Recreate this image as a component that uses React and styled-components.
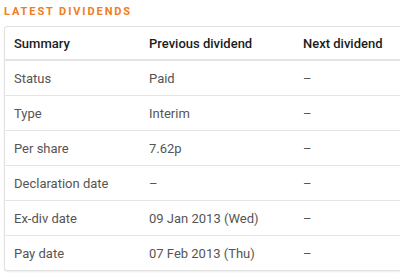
import React from "react";
import styled, { createGlobalStyle } from "styled-components";

const Global = createGlobalStyle`
  html, body { margin: 0; padding: 0; background: #fff; overflow: hidden; }
  body { font-family: Roboto, "Liberation Sans", sans-serif; }
`;

const Page = styled.div`
  padding: 5px 0 0 4px;
  width: 400px;
  box-sizing: border-box;
  overflow: hidden;
`;

const Title = styled.h2`
  margin: 0 0 8px 0;
  font-size: 11px;
  line-height: 13px;
  font-weight: 700;
  letter-spacing: 1.9px;
  color: #ef7d22;
  text-transform: uppercase;
`;

const Card = styled.div`
  border: 1px solid #e2e2e2;
  border-right: none;
  border-radius: 3px 0 0 3px;
  box-shadow: 0 1px 2px rgba(0, 0, 0, 0.08);
  margin-bottom: 3px;
  overflow: hidden;
`;

const Table = styled.table`
  border-collapse: collapse;
  width: 100%;
  table-layout: fixed;
`;

const Th = styled.th`
  box-sizing: border-box;
  text-align: left;
  font-weight: 500;
  font-size: 13px;
  color: #1c1c1c;
  height: 33px;
  padding: 0 9px;
  border-bottom: 2px solid #e4e4e4;
  white-space: nowrap;
  width: ${(p) => p.$w || "auto"};
`;

const Td = styled.td`
  font-size: 13px;
  color: #555;
  height: 34px;
  padding: 0 9px;
  border-bottom: 1px solid #e4e4e4;
  white-space: nowrap;
`;

const Tr = styled.tr`
  &:last-child td { border-bottom: none; }
`;

const rows = [
  ["Status", "Paid", "–"],
  ["Type", "Interim", "–"],
  ["Per share", "7.62p", "–"],
  ["Declaration date", "–", "–"],
  ["Ex-div date", "09 Jan 2013 (Wed)", "–"],
  ["Pay date", "07 Feb 2013 (Thu)", "–"],
];

export default function App() {
  return (
    <>
      <Global />
      <Page>
        <Title>Latest dividends</Title>
        <Card>
          <Table>
            <thead>
              <tr>
                <Th $w="135px">Summary</Th>
                <Th $w="154px">Previous dividend</Th>
                <Th>Next dividend</Th>
              </tr>
            </thead>
            <tbody>
              {rows.map((r) => (
                <Tr key={r[0]}>
                  <Td>{r[0]}</Td>
                  <Td>{r[1]}</Td>
                  <Td>{r[2]}</Td>
                </Tr>
              ))}
            </tbody>
          </Table>
        </Card>
      </Page>
    </>
  );
}
